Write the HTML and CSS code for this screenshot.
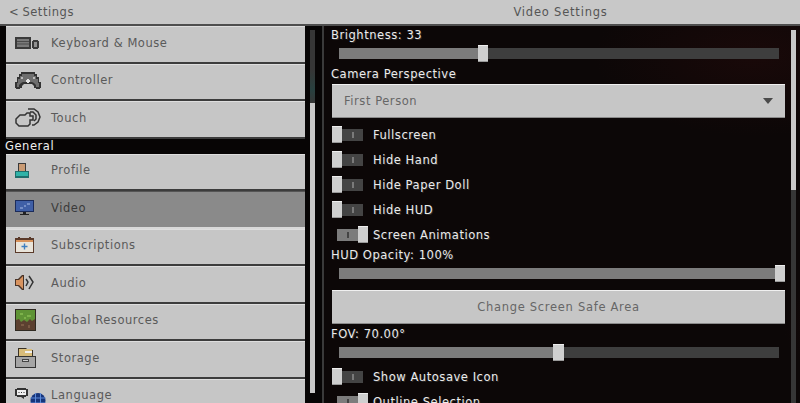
FILE: index.html
```html
<!DOCTYPE html>
<html lang="en">
<head>
  <title>Video Settings</title>
  <link rel="stylesheet" href="styles.css">
</head>
<body>
  <header class="topbar">
    <div class="topbar-left"><span class="back">&lt;</span> Settings</div>
    <div class="topbar-title">Video Settings</div>
  </header>
  <div class="panes">
    <nav class="side">
      <div class="side-list">
        <a class="item">
          <span class="slot"><svg width="25" height="12" viewBox="0 0 25 12"><rect width="16" height="12" fill="#3a3a3a"/><rect x="2" y="2" width="12" height="8" fill="#7a7a7a"/><path d="M2 4.500h12M2 7h12" stroke="#4a4a4a"/><path d="M18 3h5v1h1v7h-1v1h-5v-1h-1V4h1z" fill="#3a3a3a"/><rect x="19" y="5" width="3" height="5" fill="#909090"/></svg></span>
          Keyboard &amp; Mouse
        </a>
        <a class="item">
          <span class="slot"><svg width="26" height="17" viewBox="0 0 26 17"><path d="M6 0h14v2h2v3h2v5h2v6h-1v1h-4v-1h-2v-2l-2-2H9l-2 2v2H5v1H1v-1H0v-6h2V5h2V2h2z" fill="#333"/><path d="M7 2h12v2h2v3h2v4h1v4h-3v-2l-2-2-2-1H8l-2 1-2 2v2H2v-4h1V7h2V4h2z" fill="#6e6e6e"/><rect x="11" y="8" width="4" height="2" fill="#e4e4e4"/><rect x="12" y="7" width="2" height="4" fill="#e4e4e4"/><rect x="18" y="5" width="2" height="2" fill="#bbb"/><rect x="6" y="5" width="2" height="2" fill="#bbb"/></svg></span>
          Controller
        </a>
        <a class="item">
          <span class="slot"><svg width="26" height="19" viewBox="0 0 26 19" fill="none" stroke="#333" stroke-width="1.5"><path d="M1 11l4-4h5l2-2h3v3h3v4h-3v4l-2 2H4l-3-3z"/><path d="M13 1h6l4 3 2 5-2 5-4 3h-2"/><path d="M15 4h3l3 3v4l-2 2"/></svg></span>
          Touch
        </a>
        <div class="side-heading">General</div>
        <a class="item">
          <span class="slot"><svg width="14" height="15" viewBox="0 0 14 15"><rect x="3" width="8" height="8" fill="#3a3a3a"/><rect x="4" y="1" width="6" height="7" fill="#c99a73"/><rect y="8" width="14" height="7" fill="#1f6e6c"/><rect x="1" y="9" width="12" height="4" fill="#2fb3a8"/></svg></span>
          Profile
        </a>
        <a class="item is-active">
          <span class="slot"><svg width="19" height="15" viewBox="0 0 19 15"><rect width="19" height="12" fill="#1c2c5a"/><rect x="1" y="1" width="17" height="10" fill="#3f5fa6"/><path d="M5 8h3M12 4h3M9 6h2" stroke="#a9bde6"/><rect x="8" y="12" width="3" height="2" fill="#222"/><rect x="5" y="14" width="9" height="1" fill="#222"/></svg></span>
          Video
        </a>
        <a class="item">
          <span class="slot"><svg width="19" height="16" viewBox="0 0 19 16"><rect y="1" width="19" height="15" fill="#5a3a2a"/><rect x="1" y="3" width="17" height="12" fill="#e9e4da"/><rect x="1" y="3" width="17" height="2" fill="#d9925a"/><rect x="3" y="0" width="2" height="3" fill="#5a3a2a"/><rect x="14" y="0" width="2" height="3" fill="#5a3a2a"/><path d="M9.500 6.500v6M6.500 9.500h6" stroke="#3f7fc0" stroke-width="1.4"/></svg></span>
          Subscriptions
        </a>
        <a class="item">
          <span class="slot"><svg width="20" height="15" viewBox="0 0 20 15"><path d="M0 4h3l4-4h2v15H7l-4-4H0z" fill="#4a3428"/><path d="M1 5h3l4-4v13l-4-4H1z" fill="#d8935f"/><path d="M11 4l2 3-2 4" fill="none" stroke="#333" stroke-width="1.5"/><path d="M14 1l4 6-4 7" fill="none" stroke="#333" stroke-width="1.5"/></svg></span>
          Audio
        </a>
        <a class="item">
          <span class="slot"><svg width="21" height="22" viewBox="0 0 21 22"><rect width="21" height="22" fill="#2f2a22"/><rect x="1" y="1" width="19" height="20" fill="#5c4030"/><path d="M1 1h19v9l-3 2-2-2-3 3-3-2-3 2-2-3-3 1z" fill="#5f9436"/><path d="M5 4h3v2H5zM12 6h4v2h-4zM9 8h2v2H9z" fill="#7cb24a"/><path d="M6 15h3v2H6zM13 16h2v3h-2z" fill="#7a5a44"/></svg></span>
          Global Resources
        </a>
        <a class="item">
          <span class="slot"><svg width="21" height="20" viewBox="0 0 21 20"><path d="M3 0h8l2 2h5v6H3z" fill="#3a3226"/><rect x="4" y="1" width="13" height="7" fill="#d9bd7a"/><rect x="10" y="3" width="7" height="2" fill="#f0f0f0"/><rect y="8" width="21" height="12" fill="#333"/><rect x="1" y="9" width="19" height="10" fill="#a5a5a5"/><rect x="7" y="11" width="7" height="3" fill="#444"/><rect x="8" y="12" width="5" height="1" fill="#ccc"/></svg></span>
          Storage
        </a>
        <a class="item">
          <span class="slot"><svg class="slot-wide" width="31" height="20" viewBox="0 0 31 20"><path d="M2 0h9v1h2v7h-2v1H9v2L6 9H2V8H0V1h2z" fill="#333"/><rect x="2" y="2" width="9" height="5" fill="#eee"/><path d="M3.500 4.500h1M6 4.500h1M8.500 4.500h1" stroke="#333"/><circle cx="23" cy="12.500" r="7.500" fill="#16357c"/><path d="M15.500 10h15M15.500 15h15M20.500 5v15M25.500 5v15" stroke="#5d8ad8"/></svg></span>
          Language
        </a>
      </div>
      <div class="scroll scroll-side"><div class="scroll-space"></div><div class="scroll-thumb"></div></div>
    </nav>
    <main class="content">
      <div class="settings">
        <div class="label label-first">Brightness: 33</div>
        <div class="slider"><div class="slider-fill" style="width:139px"></div><div class="slider-thumb"></div><div class="slider-rest"></div></div>
        <div class="label label-camera">Camera Perspective</div>
        <div class="dropdown"><span>First Person</span><span class="caret"></span></div>
        <div class="toggles">
          <div class="toggle-row"><span class="toggle"><i class="knob"></i><i class="rail"><b></b></i></span>Fullscreen</div>
          <div class="toggle-row"><span class="toggle"><i class="knob"></i><i class="rail"><b></b></i></span>Hide Hand</div>
          <div class="toggle-row"><span class="toggle"><i class="knob"></i><i class="rail"><b></b></i></span>Hide Paper Doll</div>
          <div class="toggle-row"><span class="toggle"><i class="knob"></i><i class="rail"><b></b></i></span>Hide HUD</div>
          <div class="toggle-row"><span class="toggle is-on"><i class="rail"><b></b></i><i class="knob"></i></span>Screen Animations</div>
        </div>
        <div class="label label-hud">HUD Opacity: 100%</div>
        <div class="slider slider-hud"><div class="slider-fill" style="width:436px"></div><div class="slider-thumb"></div></div>
        <button class="wide-btn">Change Screen Safe Area</button>
        <div class="label label-fov">FOV: 70.00°</div>
        <div class="slider slider-fov"><div class="slider-fill" style="width:214px"></div><div class="slider-thumb slider-thumb-wide"></div><div class="slider-rest"></div></div>
        <div class="toggles toggles-last">
          <div class="toggle-row"><span class="toggle"><i class="knob"></i><i class="rail"><b></b></i></span>Show Autosave Icon</div>
          <div class="toggle-row"><span class="toggle is-on"><i class="rail"><b></b></i><i class="knob"></i></span>Outline Selection</div>
        </div>
      </div>
      <div class="scroll scroll-main"><div class="scroll-thumb"></div></div>
    </main>
  </div>
</body>
</html>
```

FILE: styles.css
```css
html, body{
  height: 100%;
}

body{
  margin: 0;
  overflow: hidden;
  background-color: #0a0808;
  font-family: "DejaVu Sans", "Liberation Sans", sans-serif;
  font-size: 11.5px;
  letter-spacing: 0.55px;
  display: flex;
  flex-direction: column;
}

.topbar{
  height: 24px;
  flex: none;
  box-sizing: content-box;
  display: flex;
  align-items: center;
  background-color: #c8c8c8;
  border-bottom: 2px solid #4e4e4e;
  color: #555555;
}

.topbar-left{
  width: 322px;
  padding-left: 9px;
  box-sizing: border-box;
}

.back{
  margin-right: -1px;
}

.topbar-title{
  flex: 1;
  text-align: center;
  letter-spacing: 0.8px;
  padding-right: 1px;
}

.panes{
  flex: 1;
  min-height: 0;
  display: flex;
}

/* left column */
.side{
  width: 322px;
  flex: none;
  display: flex;
  padding-left: 6px;
  box-sizing: border-box;
  background-color: #070505;
}

.side-list{
  width: 299px;
  flex: none;
}

.item{
  height: 37.5px;
  box-sizing: border-box;
  display: flex;
  align-items: center;
  padding-left: 9px;
  padding-bottom: 3px;
  background-color: #c6c6c6;
  border-top: 1px solid #dedede;
  border-bottom: 2px solid #3c3c3c;
  color: #5a5a5a;
}

.item.is-active{
  background-color: #8a8a8a;
  border-top-color: #555555;
  border-bottom-color: #d8d8d8;
  color: #3a3a3a;
}

.slot{
  width: 36px;
  flex: none;
  display: flex;
  align-items: center;
}

.slot svg{
  display: block;
}

.slot-wide{
  margin-top: 6px;
  flex: none;
}

.side-heading{
  height: 15px;
  line-height: 15px;
  margin-left: -1px;
  color: #eeeeee;
}

/* scrollbars */
.scroll{
  width: 5px;
  flex: none;
  display: flex;
  flex-direction: column;
  background-color: #363636;
}

.scroll-side{
  margin: 4px 0 10px 5px;
  background: linear-gradient(#363636 0 40px, #28403f 60px, #363636 73px);
}

.scroll-space{
  height: 73px;
  flex: none;
}

.scroll-side .scroll-thumb{
  flex: 1;
}

.scroll-main{
  margin: 4px 0 0 2px;
}

.scroll-main .scroll-thumb{
  height: 160px;
}

.scroll-thumb{
  background-color: #c8c8c8;
}

/* right column */
.content{
  flex: 1;
  min-width: 0;
  display: flex;
  border-left: 2px solid #3a3a3a;
  background-color: #0c0707;
  background-image:
    radial-gradient(ellipse 180px 90px at 640px 300px, #280b0d, transparent),
    radial-gradient(ellipse 160px 80px at 430px 30px, #190909, transparent),
    radial-gradient(ellipse 200px 60px at 700px 30px, #1c090b, transparent);
}

.settings{
  width: 465px;
  flex: none;
  box-sizing: border-box;
  padding: 0 0 0 8px;
  color: #ececec;
  text-shadow: 1px 1px 0 #2a2a2a;
}

.label{
  height: 14px;
  line-height: 14px;
  margin-left: -1px;
}

.label-first{
  margin-top: 2px;
}

.label-camera{
  margin-top: 5px;
}

.label-hud{
  margin-top: 1px;
}

.label-fov{
  margin-top: 3px;
}

.slider{
  height: 17px;
  width: 440px;
  margin: 3px 0 0 7px;
  display: flex;
  align-items: center;
}

.slider-hud{
  margin-top: 2.5px;
}

.slider-fill{
  height: 11px;
  flex: none;
  background-color: #7c7c7c;
}

.slider-rest{
  height: 11px;
  flex: 1;
  background-color: #3e3e3e;
}

.slider-thumb{
  width: 10px;
  height: 17px;
  flex: none;
  box-sizing: border-box;
  background-color: #cfcfcf;
  border-top: 1px solid #eeeeee;
  border-bottom: 1px solid #9a9a9a;
}

.slider-thumb-wide{
  width: 11px;
}

.dropdown{
  width: 453px;
  height: 34px;
  margin-top: 3px;
  box-sizing: border-box;
  display: flex;
  align-items: center;
  justify-content: space-between;
  padding: 0 12px 0 12px;
  background-color: #c6c6c6;
  border-top: 1px solid #f0f0f0;
  border-bottom: 1px solid #8a8a8a;
  color: #666666;
  text-shadow: none;
}

.caret{
  width: 0;
  height: 0;
  border-left: 5px solid transparent;
  border-right: 5px solid transparent;
  border-top: 6px solid #4a4a4a;
}

.toggles{
  margin-top: 4px;
}

.toggles-last{
  margin-top: 3px;
}

.toggle-row{
  height: 25px;
  display: flex;
  align-items: center;
}

.toggle{
  width: 41px;
  flex: none;
  display: flex;
  align-items: center;
}

.toggle.is-on{
  padding-left: 5px;
  box-sizing: border-box;
}

.knob{
  width: 10px;
  height: 17px;
  flex: none;
  box-sizing: border-box;
  background-color: #cfcfcf;
  border-top: 1px solid #eeeeee;
  border-bottom: 1px solid #9a9a9a;
}

.rail{
  width: 21px;
  height: 12px;
  flex: none;
  display: flex;
  align-items: center;
  justify-content: center;
  background-color: #444444;
}

.rail b{
  width: 2px;
  height: 6px;
  background-color: #7a7a7a;
}

.is-on .rail{
  background-color: #7c7c7c;
}

.is-on .rail b{
  background-color: #444444;
}

.wide-btn{
  display: block;
  width: 453px;
  height: 34px;
  margin-top: 8.5px;
  padding: 0;
  background-color: #c6c6c6;
  border: 0;
  border-top: 1px solid #f0f0f0;
  border-bottom: 1px solid #8a8a8a;
  font: inherit;
  letter-spacing: 0.7px;
  color: #666666;
}
```
